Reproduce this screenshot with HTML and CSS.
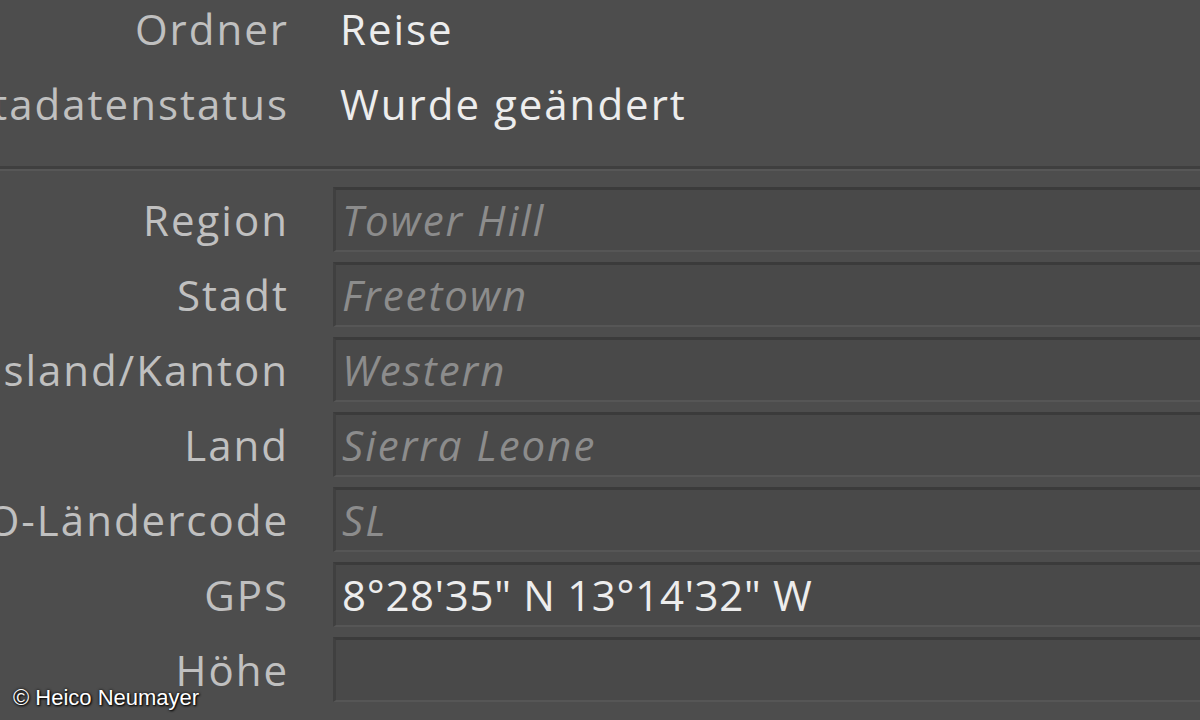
FILE: index.html
```html
<!DOCTYPE html>
<html lang="de">
<head>
<meta charset="utf-8">
<title>Metadaten</title>
<link rel="stylesheet" href="styles.css">
</head>
<body>
<div class="panel">
  <div class="info">
    <div class="row">
      <div class="label">Ordner</div>
      <div class="value plain">Reise</div>
    </div>
    <div class="row">
      <div class="label">Metadatenstatus</div>
      <div class="value plain">Wurde geändert</div>
    </div>
  </div>
  <div class="separator"></div>
  <div class="fields">
    <div class="row">
      <div class="label">Region</div>
      <div class="field"><span class="hint">Tower Hill</span></div>
    </div>
    <div class="row">
      <div class="label">Stadt</div>
      <div class="field"><span class="hint">Freetown</span></div>
    </div>
    <div class="row">
      <div class="label">Bundesland/Kanton</div>
      <div class="field"><span class="hint">Western</span></div>
    </div>
    <div class="row">
      <div class="label">Land</div>
      <div class="field"><span class="hint">Sierra Leone</span></div>
    </div>
    <div class="row">
      <div class="label">ISO-Ländercode</div>
      <div class="field"><span class="hint">SL</span></div>
    </div>
    <div class="row">
      <div class="label">GPS</div>
      <div class="field"><span class="filled">8°28'35" N 13°14'32" W</span></div>
    </div>
    <div class="row">
      <div class="label">Höhe</div>
      <div class="field"></div>
    </div>
  </div>
</div>
<div class="credit">© Heico Neumayer</div>
</body>
</html>
```

FILE: styles.css
```css
html, body {
  margin: 0;
  padding: 0;
  width: 1200px;
  height: 720px;
  overflow: hidden;
  background: #4d4d4d;
}

body {
  position: relative;
  font-family: "Open Sans", "DejaVu Sans", sans-serif;
  font-size: 42px;
  letter-spacing: 2px;
}

.panel {
  display: flex;
  flex-direction: column;
}

.info {
  margin-top: -9px;
}

.row {
  display: flex;
  align-items: center;
  height: 75px;
  line-height: 75px;
}

.label {
  width: 289px;
  flex: 0 0 289px;
  display: flex;
  justify-content: flex-end;
  white-space: nowrap;
  color: #c0c0c0;
}

.value {
  margin-left: 51px;
  white-space: nowrap;
}

.plain {
  color: #ededed;
}

.separator {
  margin-top: 25px;
  height: 3px;
  background: #3f3f3f;
  border-bottom: 2px solid #575757;
}

.fields {
  margin-top: 11px;
}

.field {
  margin-left: 44px;
  flex: 1 1 auto;
  height: 65px;
  box-sizing: border-box;
  background: #494949;
  border-top: 3px solid #3b3b3b;
  border-left: 3px solid #404040;
  border-bottom: 2px solid #565656;
  display: flex;
  align-items: center;
  padding-left: 6px;
  line-height: 1;
  white-space: nowrap;
}

.hint {
  font-style: italic;
  color: #8c8c8c;
}

.filled {
  color: #ededed;
  letter-spacing: 0.7px;
}

.credit {
  position: absolute;
  left: 13px;
  top: 685px;
  font-family: "Liberation Sans", Arial, sans-serif;
  font-size: 22px;
  letter-spacing: 0;
  color: #ffffff;
  text-shadow: 0 0 3px #000000, 1px 1px 2px #000000;
}
```
